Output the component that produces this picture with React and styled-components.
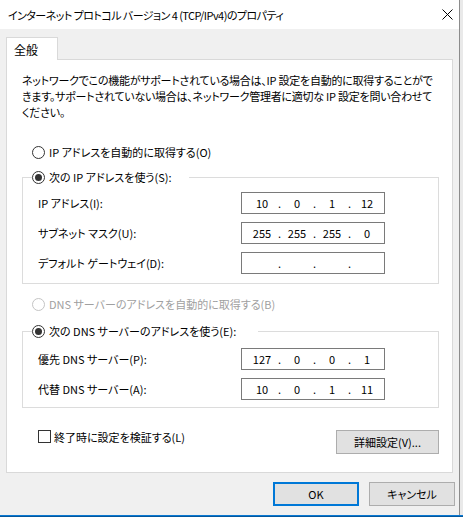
import React from "react";
import styled, { createGlobalStyle } from "styled-components";

const GlobalStyle = createGlobalStyle`
  html, body { margin: 0; padding: 0; }
  body {
    background: #e9e9e9;
    font-family: "Noto Sans CJK JP", "Noto Sans", sans-serif;
    font-size: 11px;
    color: #000;
    font-feature-settings: "palt" 1;
  }
  * { box-sizing: border-box; }
`;

const Screen = styled.div`
  width: 463px;
  height: 517px;
  display: flex;
  flex-direction: column;
  overflow: hidden;
`;

const WindowRow = styled.div`
  display: flex;
  height: 515px;
`;

const Window = styled.div`
  width: 460px;
  height: 515px;
  background: #f0f0f0;
  border-right: 1px solid #8c8c8c;
  display: flex;
  flex-direction: column;
`;

const AccentLine = styled.div`
  height: 2px;
  background: #0a78d2;
  border-bottom: 1px solid #05579a;
`;

const TitleBar = styled.div`
  height: 29px;
  background: #fff;
  display: flex;
  align-items: center;
  padding-left: 8px;
`;

const Title = styled.div`
  font-size: 11px;
  letter-spacing: -0.55px;
  line-height: 16px;
  white-space: nowrap;
`;

const CloseButton = styled.div`
  margin-left: auto;
  width: 24px;
  height: 29px;
  display: flex;
  align-items: center;
  justify-content: center;
`;

const Body = styled.div`
  flex: 1;
  display: flex;
  flex-direction: column;
  padding: 8px 6px 0 6px;
`;

const TabStrip = styled.div`
  display: flex;
`;

const Tab = styled.div`
  width: 52px;
  height: 23px;
  margin-bottom: -1px;
  background: #fff;
  border: 1px solid #d9d9d9;
  border-bottom: none;
  display: flex;
  align-items: center;
  padding-left: 7px;
  font-size: 12px;
  position: relative;
  z-index: 1;
`;

const Panel = styled.div`
  height: 414px;
  background: #fff;
  border: 1px solid #d9d9d9;
  padding: 12px 13px 0 15px;
  display: flex;
  flex-direction: column;
`;

const Description = styled.p`
  margin: 0;
  line-height: 16px;
  letter-spacing: -0.25px;
  white-space: nowrap;
`;

const OptionRow = styled.label`
  display: flex;
  align-items: center;
  height: 16px;
  margin-top: ${(p) => p.$mt}px;
  margin-left: 10px;
  color: ${(p) => (p.$disabled ? "#a0a0a0" : "#000")};
  white-space: nowrap;
`;

const RadioCircle = styled.span`
  width: 13px;
  height: 13px;
  border-radius: 50%;
  border: 1px solid ${(p) => (p.$disabled ? "#c4c4c4" : "#333")};
  background: #fff;
  display: flex;
  align-items: center;
  justify-content: center;
  margin-right: 4px;
  flex: none;
  &::after {
    content: "";
    width: 7px;
    height: 7px;
    border-radius: 50%;
    background: #333;
    display: ${(p) => (p.$checked ? "block" : "none")};
  }
`;

const Group = styled.fieldset`
  margin: ${(p) => p.$mt}px 0 0 0;
  padding: 0 0 ${(p) => p.$pb}px 0;
  border: 1px solid #dcdcdc;
  min-width: 0;
`;

const Legend = styled.legend`
  margin-left: 9px;
  padding: 0;
  width: ${(p) => p.$w}px;
  height: 16px;
  display: flex;
  align-items: center;
  white-space: nowrap;
`;

const Rows = styled.div`
  display: grid;
  grid-template-columns: 203px 144px;
  grid-auto-rows: 22px;
  row-gap: 8px;
  padding: ${(p) => p.$pt}px 0 0 15px;
`;

const FieldLabel = styled.div`
  display: flex;
  align-items: center;
  white-space: nowrap;
`;

const IpBox = styled.div`
  width: 144px;
  height: 22px;
  border: 1px solid #7a7a7a;
  background: #fff;
  display: flex;
  align-items: center;
  padding-left: 6px;
`;

const Octet = styled.span`
  width: 28px;
  text-align: center;
`;

const Dot = styled.span`
  width: 7px;
  text-align: center;
`;

const BottomRow = styled.div`
  display: flex;
  justify-content: space-between;
  align-items: flex-start;
  margin-top: 22px;
`;

const CheckRow = styled.label`
  display: flex;
  align-items: center;
  height: 13px;
  margin-left: 16px;
  white-space: nowrap;
`;

const CheckBox = styled.span`
  width: 13px;
  height: 13px;
  border: 1px solid #333;
  background: #fff;
  margin-right: 3px;
  flex: none;
`;

const Button = styled.div`
  width: ${(p) => p.$w}px;
  height: 24px;
  background: #e1e1e1;
  border: ${(p) => (p.$default ? "2px solid #0078d7" : "1px solid #adadad")};
  display: flex;
  align-items: center;
  justify-content: center;
  white-space: nowrap;
`;

const Footer = styled.div`
  display: flex;
  justify-content: flex-end;
  gap: 10px;
  margin-top: 9px;
  margin-right: -2px;
`;

const Radio = ({ checked, disabled }) => (
  <RadioCircle $checked={checked} $disabled={disabled} />
);

const IpField = ({ parts }) => (
  <IpBox>
    {parts.map((p, i) => (
      <React.Fragment key={i}>
        <Octet>{p}</Octet>
        {i < 3 && <Dot>.</Dot>}
      </React.Fragment>
    ))}
  </IpBox>
);

export default function App() {
  return (
    <Screen>
      <GlobalStyle />
      <WindowRow>
        <Window>
          <TitleBar>
            <Title>インターネット プロトコル バージョン 4 (TCP/IPv4)のプロパティ</Title>
            <CloseButton>
              <svg width="11" height="11" viewBox="0 0 11 11">
                <path d="M0.5 0.5 L10.5 10.5 M10.5 0.5 L0.5 10.5" stroke="#000" strokeWidth="1" />
              </svg>
            </CloseButton>
          </TitleBar>
          <Body>
            <TabStrip>
              <Tab>全般</Tab>
            </TabStrip>
            <Panel>
              <Description>
                ネットワークでこの機能がサポートされている場合は、IP 設定を自動的に取得することがで
                <br />
                きます。サポートされていない場合は、ネットワーク管理者に適切な IP 設定を問い合わせて
                <br />
                ください。
              </Description>

              <OptionRow $mt={24}>
                <Radio />
                IP アドレスを自動的に取得する(O)
              </OptionRow>

              <Group $mt={9} $pb={9}>
                <Legend $w={157}>
                  <Radio checked />
                  次の IP アドレスを使う(S):
                </Legend>
                <Rows $pt={7}>
                  <FieldLabel>IP アドレス(I):</FieldLabel>
                  <IpField parts={["10", "0", "1", "12"]} />
                  <FieldLabel>サブネット マスク(U):</FieldLabel>
                  <IpField parts={["255", "255", "255", "0"]} />
                  <FieldLabel>デフォルト ゲートウェイ(D):</FieldLabel>
                  <IpField parts={["", "", "", ""]} />
                </Rows>
              </Group>

              <OptionRow $mt={12} $disabled>
                <Radio disabled />
                DNS サーバーのアドレスを自動的に取得する(B)
              </OptionRow>

              <Group $mt={11} $pb={7}>
                <Legend $w={226}>
                  <Radio checked />
                  次の DNS サーバーのアドレスを使う(E):
                </Legend>
                <Rows $pt={9}>
                  <FieldLabel>優先 DNS サーバー(P):</FieldLabel>
                  <IpField parts={["127", "0", "0", "1"]} />
                  <FieldLabel>代替 DNS サーバー(A):</FieldLabel>
                  <IpField parts={["10", "0", "1", "11"]} />
                </Rows>
              </Group>

              <BottomRow>
                <CheckRow>
                  <CheckBox />
                  終了時に設定を検証する(L)
                </CheckRow>
                <Button $w={103}>詳細設定(V)...</Button>
              </BottomRow>
            </Panel>
            <Footer>
              <Button $w={86} $default>OK</Button>
              <Button $w={86}>キャンセル</Button>
            </Footer>
          </Body>
        </Window>
      </WindowRow>
      <AccentLine />
    </Screen>
  );
}
